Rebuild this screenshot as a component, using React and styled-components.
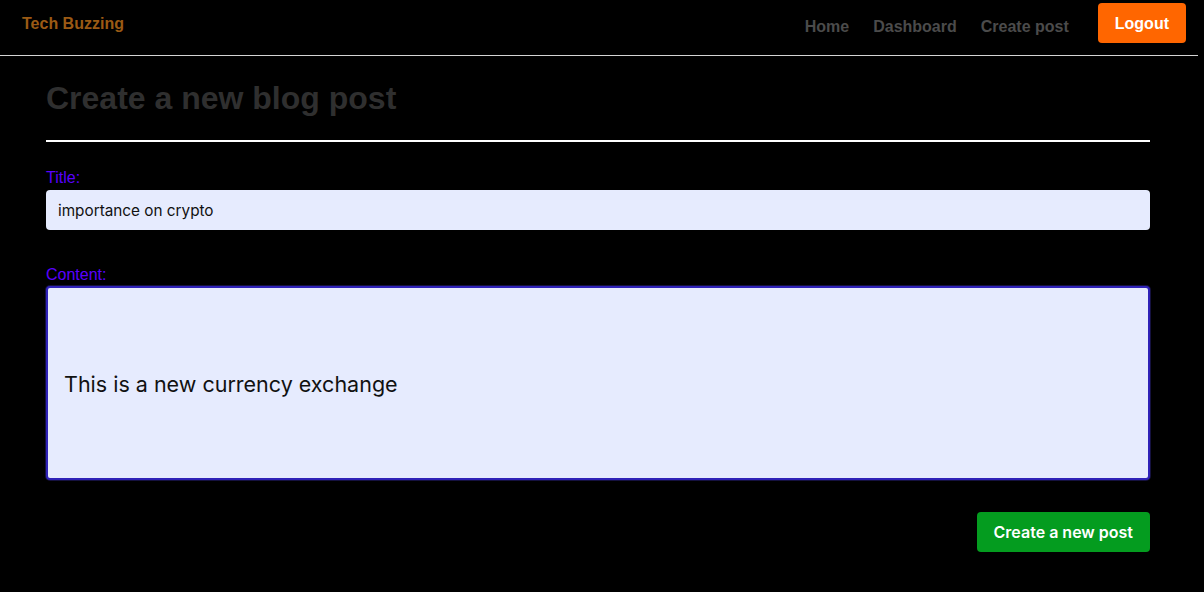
import { createGlobalStyle } from 'styled-components'
import styled from 'styled-components'

const GlobalStyle = createGlobalStyle`
    * {
        box-sizing: border-box;
    }
    body {
        margin: 0;
        background: #000000;
        font-family: 'Liberation Sans', Arial, sans-serif;
    }
`

const Header = styled.header`
    display: flex;
    align-items: flex-start;
    width: 1198px;
    height: 56px;
    padding: 0 12px 0 22px;
    border-bottom: 1px solid #d4d4d4;
`

const Brand = styled.a`
    margin-top: 15px;
    font-weight: 700;
    font-size: 16px;
    color: #9b5a14;
    text-decoration: none;
`

const Nav = styled.nav`
    display: flex;
    align-items: flex-start;
    gap: 24px;
    margin-left: auto;
`

const NavLink = styled.a`
    margin-top: 18px;
    font-weight: 700;
    font-size: 16px;
    color: #4b4b4b;
    text-decoration: none;
`

const LogoutButton = styled.button`
    height: 40px;
    margin: 3px 0 0 5px;
    padding: 2px 17px 0;
    border: 0;
    border-radius: 4px;
    background: #ff6600;
    color: #ffffff;
    font-family: 'Liberation Sans', Arial, sans-serif;
    font-weight: 700;
    font-size: 16px;
    cursor: pointer;
`

const Main = styled.main`
    width: 1104px;
    margin-left: 46px;
    display: flex;
    flex-direction: column;
`

const Heading = styled.h1`
    margin: 24px 0 0;
    font-size: 32px;
    font-weight: 700;
    color: #2f2f2f;
`

const Rule = styled.hr`
    width: 100%;
    height: 2px;
    margin: 23px 0 0;
    border: 0;
    background: #ffffff;
`

const Label = styled.label`
    margin-top: ${(p) => p.$top}px;
    font-size: 16px;
    color: #5a00ff;
`

const TitleInput = styled.input`
    height: 40px;
    margin-top: 3px;
    padding: 0 12px;
    border: 0;
    border-radius: 4px;
    background: #e6ebfe;
    color: #111111;
    font-family: Inter, 'Noto Sans', sans-serif;
    font-size: 15.3px;
    outline: none;
`

const ContentArea = styled.textarea`
    height: 194px;
    margin-top: 2px;
    padding: 83px 16px 0;
    border: 2px solid #2f22b8;
    border-radius: 4px;
    box-shadow: 0 0 0 1px #15113f;
    background: #e6ebfe;
    color: #111111;
    font-family: Inter, 'Noto Sans', sans-serif;
    font-size: 21.5px;
    line-height: 26px;
    resize: none;
    outline: none;
`

const Actions = styled.div`
    display: flex;
    justify-content: flex-end;
    margin-top: 32px;
`

const SubmitButton = styled.button`
    height: 40px;
    padding: 0 17px;
    border: 0;
    border-radius: 4px;
    background: #049c1f;
    color: #ffffff;
    font-family: Inter, 'Noto Sans', sans-serif;
    font-weight: 600;
    font-size: 16px;
    cursor: pointer;
`

function App() {
    return (
        <>
            <GlobalStyle />
            <Header>
                <Brand href='#'>Tech Buzzing</Brand>
                <Nav>
                    <NavLink href='#'>Home</NavLink>
                    <NavLink href='#'>Dashboard</NavLink>
                    <NavLink href='#'>Create post</NavLink>
                    <LogoutButton>Logout</LogoutButton>
                </Nav>
            </Header>
            <Main>
                <Heading>Create a new blog post</Heading>
                <Rule />
                <Label $top={27}>Title:</Label>
                <TitleInput defaultValue='importance on crypto' />
                <Label $top={36}>Content:</Label>
                <ContentArea defaultValue='This is a new currency exchange' />
                <Actions>
                    <SubmitButton>Create a new post</SubmitButton>
                </Actions>
            </Main>
        </>
    )
}

export default App
